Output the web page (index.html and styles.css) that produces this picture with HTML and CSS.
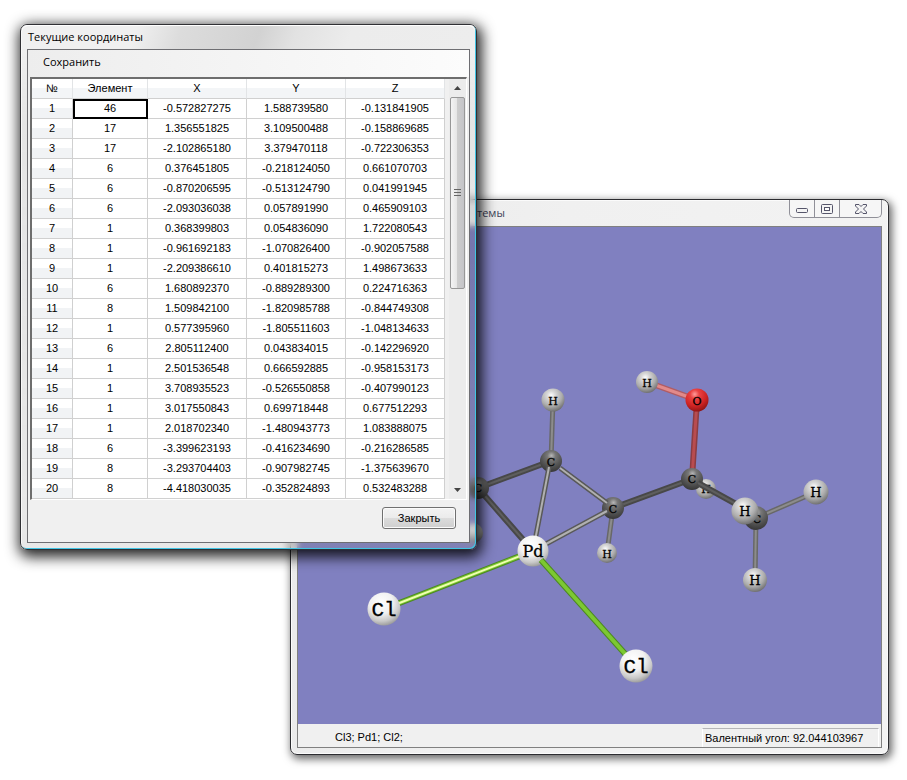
FILE: index.html
```
<!DOCTYPE html>
<html lang="ru">
<head>
<meta charset="utf-8">
<title>Текущие координаты</title>
<link rel="stylesheet" href="styles.css">
</head>
<body>
<main class="desktop">
  <section class="window viewer">
    <header class="titlebar viewer-title">
      <span class="viewer-name">темы</span>
      <div class="caption-buttons">
        <button type="button" class="cap" aria-label="Свернуть"><svg width="12" height="6" viewBox="0 0 12 6"><rect x=".5" y=".5" width="11" height="4" rx="1" fill="#f4f4f4" stroke="#55556a"/></svg></button>
        <button type="button" class="cap" aria-label="Развернуть"><svg width="12" height="10" viewBox="0 0 12 10"><rect x=".5" y=".5" width="11" height="9" rx="1" fill="#f4f4f4" stroke="#55556a"/><rect x="3.5" y="3.5" width="5" height="3" fill="#fff" stroke="#55556a"/></svg></button>
        <button type="button" class="cap cap-close" aria-label="Закрыть окно"><svg width="12" height="10" viewBox="0 0 12 10"><path d="M.5.5H4L6 2.500 8 .5h3.500V2L8.500 5l3 3v1.500H8L6 7.500 4 9.500H.5V8l3-3-3-3Z" fill="#f4f4f4" stroke="#55556a" stroke-linejoin="round"/></svg></button>
      </div>
    </header>
    <div class="client">
      <svg class="scene" viewBox="298 227 583 497" role="img" aria-label="Модель молекулы">
        <defs>
          <radialGradient id="gH" cx=".42" cy=".3" r=".72"><stop offset="0" stop-color="#fff"/><stop offset=".25" stop-color="#d8d8d8"/><stop offset=".65" stop-color="#acacac"/><stop offset="1" stop-color="#6c6c6c"/></radialGradient>
          <radialGradient id="gC" cx=".52" cy=".26" r=".75"><stop offset="0" stop-color="#b8b8b8"/><stop offset=".25" stop-color="#777"/><stop offset=".6" stop-color="#565656"/><stop offset="1" stop-color="#363636"/></radialGradient>
          <radialGradient id="gO" cx=".4" cy=".25" r=".78"><stop offset="0" stop-color="#ff9a9a"/><stop offset=".25" stop-color="#ea4242"/><stop offset=".65" stop-color="#cf2424"/><stop offset="1" stop-color="#8c1414"/></radialGradient>
          <radialGradient id="gM" cx=".42" cy=".3" r=".76"><stop offset="0" stop-color="#fff"/><stop offset=".45" stop-color="#f2f2f2"/><stop offset=".75" stop-color="#c8c8c8"/><stop offset="1" stop-color="#8c8c8c"/></radialGradient>
        </defs>
        <g class="bond dark">
          <path class="edge" d="M478 488 551 461M478 488 533 551M613 508 692 479"/>
          <path class="core" d="M478 488 551 461M478 488 533 551M613 508 692 479"/>
        </g>
        <g class="bond mid">
          <path class="edge" d="M553 400 551 461M613 508 607 553M756 518 816 492M756 518 755 580"/>
          <path class="core" d="M553 400 551 461M613 508 607 553M756 518 816 492M756 518 755 580"/>
        </g>
        <g class="bond red"><path class="edge" d="M697 400 692 479"/><path class="core" d="M697 400 692 479"/></g>
        <g class="bond pink"><path class="edge" d="M647 382 697 400"/><path class="core" d="M647 382 697 400"/></g>
        <g class="bond green"><path class="edge" d="M384 609 533 551"/><path class="core" d="M384 609 533 551"/><path class="shine" d="M384 609 533 551"/></g>

        <circle cx="473" cy="533" r="10" fill="url(#gH)"/>
        <circle cx="706" cy="489" r="10" fill="url(#gH)"/><text class="atom" x="706" y="493">H</text>
        <circle cx="553" cy="400" r="11.500" fill="url(#gH)"/><text class="atom" x="553" y="405">H</text>
        <circle cx="551" cy="461" r="11" fill="url(#gC)"/>
        <circle cx="478" cy="488" r="11" fill="url(#gC)"/><text class="atom" x="478" y="492">C</text>
        <circle cx="613" cy="508" r="11" fill="url(#gC)"/>
        <g class="bond light">
          <path class="edge" d="M560 468 607 503M549 467 533 551M607 511 533 551"/>
          <path class="core" d="M560 468 607 503M549 467 533 551M607 511 533 551"/>
        </g>
        <text class="atom" x="551" y="466">C</text>
        <text class="atom" x="613" y="513">C</text>
        <circle cx="607" cy="553" r="10" fill="url(#gH)"/><text class="atom" x="607" y="558">H</text>
        <circle cx="692" cy="479" r="11" fill="url(#gC)"/><text class="atom" x="692" y="483">C</text>
        <g class="bond dark"><path class="edge" d="M698 483 745 509"/><path class="core" d="M698 483 745 509"/></g>
        <circle cx="756" cy="518" r="12" fill="url(#gC)"/><text class="atom" x="757" y="523">C</text>
        <circle cx="745" cy="511" r="13.500" fill="url(#gH)"/><text class="atom near" x="745" y="516">H</text>
        <circle cx="816" cy="492" r="12.500" fill="url(#gH)"/><text class="atom near" x="816" y="497">H</text>
        <circle cx="755" cy="580" r="12" fill="url(#gH)"/><text class="atom near" x="755" y="585">H</text>
        <circle cx="647" cy="382" r="11" fill="url(#gH)"/><text class="atom" x="647" y="387">H</text>
        <circle cx="697" cy="400" r="11.500" fill="url(#gO)"/><text class="atom" x="697" y="405">O</text>
        <circle cx="533" cy="551" r="15.500" fill="url(#gM)"/>
        <g class="bond green"><path class="edge" d="M541 560 636 666"/><path class="core" d="M541 560 636 666"/></g>
        <text class="atom metal" x="533" y="557">Pd</text>
        <circle cx="384" cy="609" r="16.500" fill="url(#gM)"/><text class="atom chlorine" x="384" y="616">Cl</text>
        <circle cx="636" cy="666" r="16.500" fill="url(#gM)"/><text class="atom chlorine" x="636" y="673">Cl</text>
      </svg>
      <footer class="status">
        <span class="status-atoms">Cl3; Pd1; Cl2;</span>
        <output class="status-angle">Валентный угол: 92.044103967</output>
      </footer>
    </div>
  </section>

  <section class="window coords">
    <header class="titlebar coords-title"><h1>Текущие координаты</h1></header>
    <div class="client">
      <nav class="menu"><button type="button">Сохранить</button></nav>
      <div class="grid-box">
        <table>
          <colgroup><col class="c-num"><col class="c-el"><col class="c-val"><col class="c-val"><col class="c-val"></colgroup>
          <thead><tr><th scope="col">№</th><th scope="col">Элемент</th><th scope="col">X</th><th scope="col">Y</th><th scope="col">Z</th></tr></thead>
          <tbody>
            <tr><th scope="row">1</th><td class="current">46</td><td>-0.572827275</td><td>1.588739580</td><td>-0.131841905</td></tr>
            <tr><th scope="row">2</th><td>17</td><td>1.356551825</td><td>3.109500488</td><td>-0.158869685</td></tr>
            <tr><th scope="row">3</th><td>17</td><td>-2.102865180</td><td>3.379470118</td><td>-0.722306353</td></tr>
            <tr><th scope="row">4</th><td>6</td><td>0.376451805</td><td>-0.218124050</td><td>0.661070703</td></tr>
            <tr><th scope="row">5</th><td>6</td><td>-0.870206595</td><td>-0.513124790</td><td>0.041991945</td></tr>
            <tr><th scope="row">6</th><td>6</td><td>-2.093036038</td><td>0.057891990</td><td>0.465909103</td></tr>
            <tr><th scope="row">7</th><td>1</td><td>0.368399803</td><td>0.054836090</td><td>1.722080543</td></tr>
            <tr><th scope="row">8</th><td>1</td><td>-0.961692183</td><td>-1.070826400</td><td>-0.902057588</td></tr>
            <tr><th scope="row">9</th><td>1</td><td>-2.209386610</td><td>0.401815273</td><td>1.498673633</td></tr>
            <tr><th scope="row">10</th><td>6</td><td>1.680892370</td><td>-0.889289300</td><td>0.224716363</td></tr>
            <tr><th scope="row">11</th><td>8</td><td>1.509842100</td><td>-1.820985788</td><td>-0.844749308</td></tr>
            <tr><th scope="row">12</th><td>1</td><td>0.577395960</td><td>-1.805511603</td><td>-1.048134633</td></tr>
            <tr><th scope="row">13</th><td>6</td><td>2.805112400</td><td>0.043834015</td><td>-0.142296920</td></tr>
            <tr><th scope="row">14</th><td>1</td><td>2.501536548</td><td>0.666592885</td><td>-0.958153173</td></tr>
            <tr><th scope="row">15</th><td>1</td><td>3.708935523</td><td>-0.526550858</td><td>-0.407990123</td></tr>
            <tr><th scope="row">16</th><td>1</td><td>3.017550843</td><td>0.699718448</td><td>0.677512293</td></tr>
            <tr><th scope="row">17</th><td>1</td><td>2.018702340</td><td>-1.480943773</td><td>1.083888075</td></tr>
            <tr><th scope="row">18</th><td>6</td><td>-3.399623193</td><td>-0.416234690</td><td>-0.216286585</td></tr>
            <tr><th scope="row">19</th><td>8</td><td>-3.293704403</td><td>-0.907982745</td><td>-1.375639670</td></tr>
            <tr><th scope="row">20</th><td>8</td><td>-4.418030035</td><td>-0.352824893</td><td>0.532483288</td></tr>
          </tbody>
        </table>
        <div class="scrollbar">
          <button type="button" class="arrow" aria-label="Вверх"><svg width="7" height="4" viewBox="0 0 7 4"><path d="M0 4 3.500 0 7 4Z" fill="#444"/></svg></button>
          <div class="track"><div class="thumb"><i></i><i></i><i></i></div></div>
          <button type="button" class="arrow" aria-label="Вниз"><svg width="7" height="4" viewBox="0 0 7 4"><path d="M0 0 3.500 4 7 0Z" fill="#444"/></svg></button>
        </div>
      </div>
      <footer class="actions"><button type="button" class="close">Закрыть</button></footer>
    </div>
  </section>
</main>
</body>
</html>
```
FILE: styles.css
```
* { box-sizing: border-box; }
body { margin: 0; background: #fff; color: #000; font: 11px/16px "Liberation Sans", Arial, sans-serif; }
button { font: inherit; color: inherit; border: 0; background: none; padding: 0; }
.desktop { position: relative; min-height: 100vh; }

.window { position: absolute; border: 1px solid #2c2c30; border-radius: 7px; padding: 0 6px 6px; }
.titlebar { display: flex; font: 11px/16px "Open Sans", "Noto Sans", sans-serif; }
.client { border: 1px solid #6e6e72; background: #f0f0f0; }

.viewer { left: 290px; right: 18px; top: 199px; background: linear-gradient(100deg, #e9e9e9, #f0f0f0 40%, #f3f3f3); box-shadow: inset 0 0 0 1px #fbfbfb, 2px 3px 8px 1px rgba(0, 0, 0, .6); }
.viewer-title { height: 26px; justify-content: space-between; align-items: flex-start; }
.viewer-name { padding: 5px 0 0 180px; color: #3c4258; }
.viewer .client { border-color: #808080; }
.caption-buttons { display: flex; border: 1px solid #909098; border-top: 0; border-radius: 0 0 5px 5px; background: #f6f6f6; }
.cap { display: grid; place-items: center; width: 25px; height: 17px; border-right: 1px solid #909098; }
.cap:first-child svg { margin-top: 5px; }
.cap-close { width: 41px; border-right: 0; }

.scene { display: block; width: 100%; background: #8080c0; }
.bond { fill: none; }
.bond .edge { stroke-width: 6; }
.bond .core { stroke-width: 2; }
.dark .edge { stroke: #484848; }
.dark .core { stroke: #5e5e5e; }
.mid .edge { stroke: #686868; stroke-width: 5; }
.mid .core { stroke: #8c8c8c; }
.light .edge { stroke: #595959; stroke-width: 5; }
.light .core { stroke: #b0b0b0; }
.red .edge { stroke: #8c3c42; }
.red .core { stroke: #b84c50; stroke-width: 3; }
.pink .edge { stroke: #b05c64; }
.pink .core { stroke: #e28a8a; stroke-width: 3; }
.green .edge { stroke: #4c8a20; }
.green .core { stroke: #7cc832; stroke-width: 4; }
.green .shine { stroke: #f0ffb0; stroke-width: 2; }
.atom { font: 11px "DejaVu Serif", serif; text-anchor: middle; stroke: #000; stroke-width: .3px; }
.atom.near { font-size: 13px; }
.atom.metal { font-size: 16px; }
.atom.chlorine { font: 21px "Liberation Mono", monospace; }

.status { display: flex; justify-content: space-between; height: 23px; padding: 4px 2px 0 37px; }
.status-atoms { padding-top: 1px; }
.status-angle { width: 177px; padding: 1px 3px 0 2px; border: 1px solid #b4b4b8; border-width: 1px 1px 0; border-left-color: #fff; border-right-color: #fff; white-space: nowrap; }

.coords { left: 20px; top: 24px; background: linear-gradient(rgba(255, 255, 255, .5), rgba(255, 255, 255, 0) 100px, rgba(255, 255, 255, .1)), rgba(0, 0, 0, .1); backdrop-filter: blur(3px); border-color: #303034; box-shadow: inset -1px -1px 0 #40c4e4, inset 1px 1px 0 #f8f8f8, 2px 4px 14px 3px rgba(0, 0, 0, .85); }
.coords-title { height: 24px; margin: 0 -5px; padding: 4px 6px 0; border-radius: 6px 6px 0 0; background: linear-gradient(110deg, #f0f0f0 0 25%, #dcdcdc 35%, #d2d2d2 52%, #e2e2e2 60%, #ececec 72%, #ededed); box-shadow: inset 0 1px 0 #fff; }
.coords-title h1 { margin: 0; font: inherit; }
.coords .client { padding: 0 2px; }
.menu { height: 27px; margin: 0 -2px; padding: 4px 15px; background: linear-gradient(90deg, #ededed, #fcfcfc); font: 11px/16px "Open Sans", "Noto Sans", sans-serif; }
.grid-box { display: flex; justify-content: space-between; gap: 4px; background: #f0f0f0; border: 1px solid #fff; border-top: 2px solid #6e6e6e; border-left: 2px solid #6e6e6e; }
table { border-collapse: separate; border-spacing: 0; table-layout: fixed; width: 413px; background: #fff; }
.c-num { width: 41px; }
.c-el { width: 75px; }
.c-val { width: 99px; }
th, td { padding: 0; height: 20px; line-height: 19px; text-align: center; font-weight: normal; border: 1px solid #d0d0d0; border-width: 0 1px 1px 0; }
thead th { height: 19px; border-right-color: #e2e4e6; background: linear-gradient(#fff 50%, #f3f5f7 50%); }
tbody th { background: linear-gradient(#fff 45%, #f1f3f5 50%); }
.current { outline: 2px solid #000; outline-offset: -2px; }
.scrollbar { display: flex; flex-direction: column; width: 17px; background: #ececec; }
.arrow { display: grid; place-items: center; height: 18px; }
.track { flex: 1; }
.thumb { display: flex; flex-direction: column; align-items: center; justify-content: center; gap: 1px; width: 15px; height: 50%; margin: 0 1px; border: 1px solid #979797; border-radius: 2px; background: linear-gradient(90deg, #f4f4f4, #e6e6e6 45%, #cdcdcd 50%, #c4c4c8); }
.thumb i { width: 7px; height: 2px; border: 1px solid #666; border-width: 1px 0 0; }
.actions { display: flex; justify-content: flex-end; padding: 7px 11px 13px; }
.close { width: 74px; height: 22px; border: 1px solid #707070; border-radius: 3px; background: linear-gradient(#f3f3f3, #ebebeb 50%, #dcdcdc 50%, #cfcfcf); box-shadow: inset 0 0 0 1px #fbfbfb; }
```
